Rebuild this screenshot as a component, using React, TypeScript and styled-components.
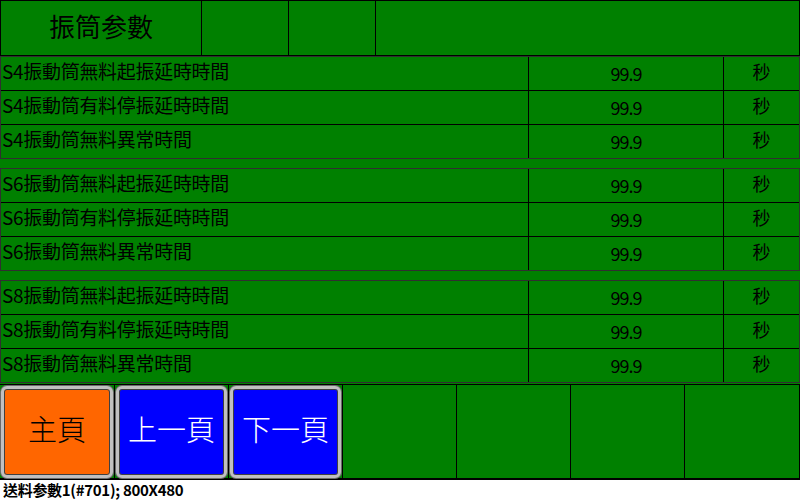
import React from "react"
import styled, { createGlobalStyle } from "styled-components"

const GlobalStyle = createGlobalStyle`
  html, body {
    margin: 0;
    padding: 0;
    background: #ffffff;
  }
  body {
    font-family: "Noto Sans CJK TC", "Noto Sans CJK SC", sans-serif;
  }
`

const Screen = styled.div`
  width: 800px;
  height: 480px;
  background: #008000;
  display: flex;
  flex-direction: column;
  box-sizing: border-box;
`

const Header = styled.div`
  height: 56px;
  display: grid;
  grid-template-columns: 200px 87px 87px 1fr;
  border: 1px solid #000;
  box-sizing: border-box;
`

const HeaderCell = styled.div<{ $first?: boolean }>`
  border-left: ${p => (p.$first ? "none" : "1px solid #000")};
  display: flex;
  align-items: center;
  justify-content: center;
  font-size: 26px;
  color: #000;
  padding-bottom: 6px;
`

const Group = styled.div<{ $gap: number }>`
  margin-top: ${p => p.$gap}px;
  border: 1px solid #303030;
  display: flex;
  flex-direction: column;
`

const Row = styled.div<{ $last?: boolean }>`
  height: 33px;
  display: grid;
  grid-template-columns: 527px 195px 1fr;
  border-bottom: ${p => (p.$last ? "none" : "1px solid #000")};
  color: #000;
`

const Label = styled.div`
  font-size: 19px;
  line-height: 28px;
  padding-left: 1px;
  white-space: nowrap;
  letter-spacing: -0.3px;
`

const Value = styled.div`
  border-left: 1px solid #000;
  display: flex;
  align-items: center;
  justify-content: center;
  font-size: 18px;
  letter-spacing: -1px;
  padding-bottom: 2px;
`

const Unit = styled(Value)`
  letter-spacing: 0;
  padding-bottom: 5px;
`

const ButtonBar = styled.div`
  margin-top: 1px;
  flex: 1;
  display: grid;
  grid-template-columns: repeat(7, 114px);
  border-top: 1px solid #000;
  border-bottom: 2px solid #000;
  border-right: 1px solid #000;
`

const BarCell = styled.div<{ $first?: boolean }>`
  border-left: ${p => (p.$first ? "none" : "1px solid #000")};
  padding: 1px 1px 0 1px;
  display: flex;
`

const Key = styled.button<{ $bg: string; $fg: string }>`
  flex: 1;
  margin: 0;
  padding: 0 0 8px 0;
  border: 3px solid #c0c0c0;
  border-radius: 6px;
  box-shadow: 0 0 0 1px #6a6a6a, inset 0 0 0 1px #404040;
  background: ${p => p.$bg};
  color: ${p => p.$fg};
  font-family: "Noto Sans CJK TC", sans-serif;
  font-size: 29px;
  font-weight: 300;
  display: flex;
  align-items: center;
  justify-content: center;
  cursor: pointer;
`

const Status = styled.div`
  height: 22px;
  padding-left: 3px;
  font-size: 15px;
  font-weight: bold;
  color: #000;
  line-height: 20px;
  letter-spacing: -0.3px;
`

const groups = ["S4", "S6", "S8"]
const items = ["振動筒無料起振延時時間", "振動筒有料停振延時時間", "振動筒無料異常時間"]

export default function App() {
  return (
    <>
      <GlobalStyle />
      <Screen>
        <Header>
          <HeaderCell $first>振筒参數</HeaderCell>
          <HeaderCell />
          <HeaderCell />
          <HeaderCell />
        </Header>
        {groups.map((g, gi) => (
          <Group key={g} $gap={gi === 0 ? 0 : 9}>
            {items.map((it, i) => (
              <Row key={it} $last={i === items.length - 1}>
                <Label>
                  {g}
                  {it}
                </Label>
                <Value>99.9</Value>
                <Unit>秒</Unit>
              </Row>
            ))}
          </Group>
        ))}
        <ButtonBar>
          <BarCell $first>
            <Key $bg="#ff6600" $fg="#000">主頁</Key>
          </BarCell>
          <BarCell>
            <Key $bg="#0000ff" $fg="#fff">上一頁</Key>
          </BarCell>
          <BarCell>
            <Key $bg="#0000ff" $fg="#fff">下一頁</Key>
          </BarCell>
          <BarCell />
          <BarCell />
          <BarCell />
          <BarCell />
        </ButtonBar>
      </Screen>
      <Status>送料参數1(#701); 800X480</Status>
    </>
  )
}
